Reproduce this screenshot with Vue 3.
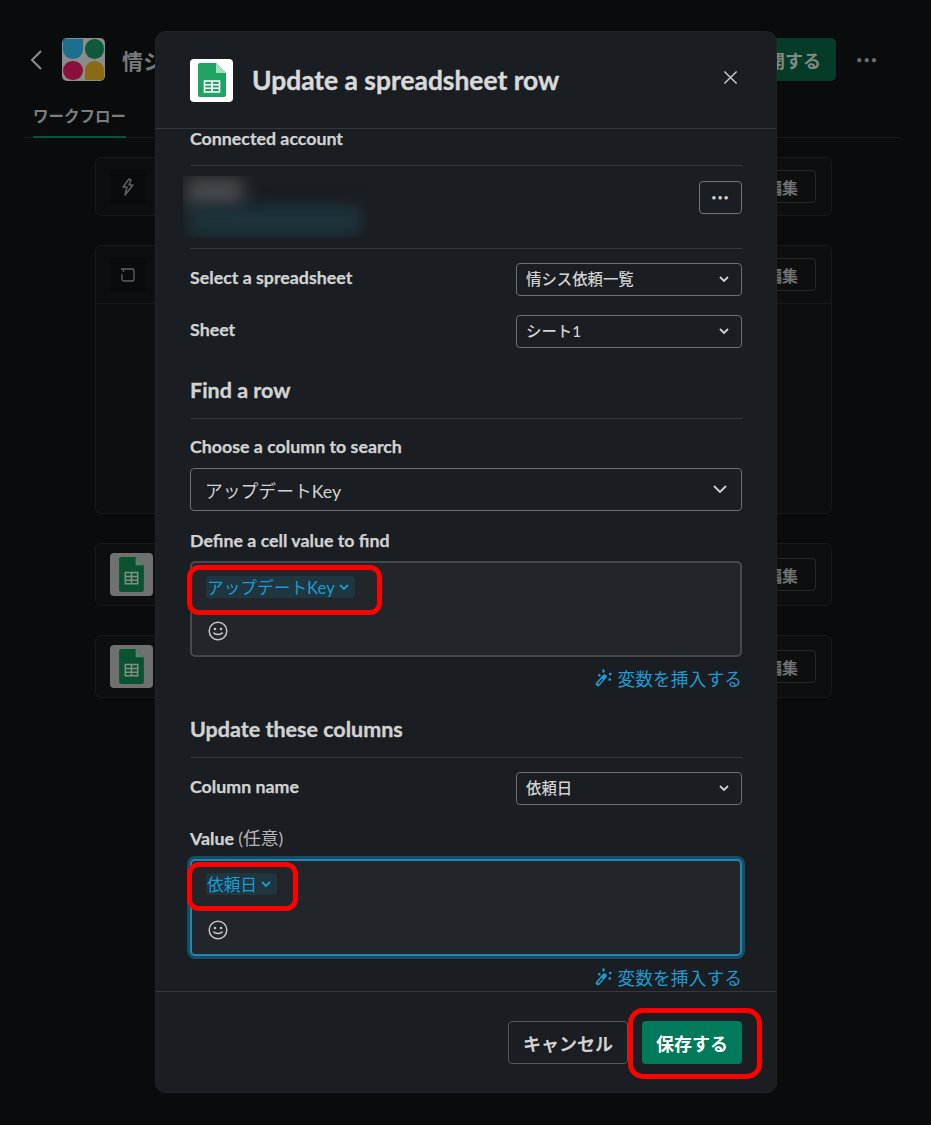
<script setup>
const cards = [
  { kind: 'zap', tall: false },
  { kind: 'loop', tall: true },
  { kind: 'sheet', tall: false },
  { kind: 'sheet', tall: false },
]
</script>

<template>
  <div class="page">
    <div class="bg">
      <header class="top">
        <svg class="back" width="16" height="24" viewBox="0 0 16 24"><path d="M13 3 4 12l9 9" fill="none" stroke="#8a8d90" stroke-width="2"/></svg>
        <div class="applogo">
          <i class="q q1"></i><i class="q q2"></i><i class="q q3"></i><i class="q q4"></i>
        </div>
        <span class="apptitle">情シス依頼</span>
        <span class="grow"></span>
        <span class="publish">公開する</span>
        <span class="more">•••</span>
      </header>
      <nav class="tabs"><span class="tab">ワークフロー</span></nav>
      <div class="cards">
        <section v-for="(c, i) in cards" :key="i" class="card" :class="{ tall: c.tall, sheetcard: c.kind === 'sheet' }">
          <div class="cardhead">
            <div v-if="c.kind === 'sheet'" class="dimsheet">
              <svg width="25" height="35" viewBox="0 0 24 34"><path d="M2 0h14l8 8v24a2 2 0 0 1-2 2H2a2 2 0 0 1-2-2V2a2 2 0 0 1 2-2Z" fill="#0a5231"/><path d="M16 0l8 8h-8Z" fill="#5f7f6e"/><path d="M6 15h12v11H6Zm0 4h12M6 22.500h12M12 15v11" fill="none" stroke="#7f8f86" stroke-width="1.500"/></svg>
            </div>
            <div v-else class="dimicon">
              <svg v-if="c.kind === 'zap'" width="16" height="18" viewBox="0 0 16 18"><path d="M9 1 3 9h4l-2 8 8-10H9l2-5Z" fill="none" stroke="#5f6163" stroke-width="1.500" stroke-linejoin="round"/></svg>
              <svg v-else width="16" height="16" viewBox="0 0 16 16"><path d="M5 2h8a2 2 0 0 1 1 2v8a2 2 0 0 1-2 2H4a2 2 0 0 1-2-2V7M1 2h5M3.500 2v3" fill="none" stroke="#5f6163" stroke-width="1.300"/></svg>
            </div>
            <span class="grow"></span>
            <span class="editbtn">編集</span>
          </div>
          <div v-if="c.tall" class="cardbody"></div>
        </section>
      </div>
    </div>

    <div class="modal">
      <header class="mhead">
        <div class="sheetlogo">
          <svg width="30" height="36" viewBox="0 0 30 36">
            <path d="M3 1h16l10 10v22a2 2 0 0 1-2 2H3a2 2 0 0 1-2-2V3a2 2 0 0 1 2-2Z" fill="#1fa463"/>
            <path d="M19 1l10 10H19Z" fill="#a8dcc1"/>
            <path d="M7.500 19h15v11h-15Zm0 3.700h15m-15 3.600h15M15 19v11" fill="none" stroke="#fff" stroke-width="1.600"/>
          </svg>
        </div>
        <h1 class="mtitle">Update a spreadsheet row</h1>
        <svg class="close" width="15" height="15" viewBox="0 0 16 16"><path d="M1.500 1.500l13 13m0-13l-13 13" stroke="#c9cbcc" stroke-width="1.500" fill="none"/></svg>
      </header>

      <div class="mbody">
        <div class="label first">Connected account</div>
        <div class="account">
          <div class="blurbox"><i class="b1"></i><i class="b2"></i></div>
          <span class="dotsbtn">•••</span>
        </div>

        <div class="row row1">
          <span class="label">Select a spreadsheet</span>
          <div class="sel small"><span>情シス依頼一覧</span><svg width="10" height="7" viewBox="0 0 10 7"><path d="M1 1l4 4 4-4" fill="none" stroke="#d1d2d3" stroke-width="1.800"/></svg></div>
        </div>
        <div class="row row2">
          <span class="label">Sheet</span>
          <div class="sel small"><span>シート1</span><svg width="10" height="7" viewBox="0 0 10 7"><path d="M1 1l4 4 4-4" fill="none" stroke="#d1d2d3" stroke-width="1.800"/></svg></div>
        </div>

        <h2 class="sec sec1">Find a row</h2>
        <div class="label lab1">Choose a column to search</div>
        <div class="sel big"><span>アップデートKey</span><svg width="14" height="9" viewBox="0 0 14 9"><path d="M1 1l6 6 6-6" fill="none" stroke="#d1d2d3" stroke-width="1.800"/></svg></div>
        <div class="label lab2">Define a cell value to find</div>
        <div class="area">
          <span class="tag">アップデートKey<svg width="10" height="7" viewBox="0 0 10 7"><path d="M1 1l4 4 4-4" fill="none" stroke="#1d9bd1" stroke-width="1.800"/></svg></span>
          <svg class="smile" width="20" height="20" viewBox="0 0 20 20"><circle cx="10" cy="10" r="8.800" fill="none" stroke="#c4c5c6" stroke-width="1.500"/><circle cx="7" cy="8" r="1.300" fill="#c4c5c6"/><circle cx="13" cy="8" r="1.300" fill="#c4c5c6"/><path d="M5.500 11.500c1 2.600 8 2.600 9 0" fill="none" stroke="#c4c5c6" stroke-width="1.500"/></svg>
        </div>
        <div class="insert">
          <svg width="18" height="18" viewBox="0 0 18 18"><path d="M3 15 9.500 7.500" stroke="#1d9bd1" stroke-width="4.400" stroke-linecap="round"/><path d="M3.500 14.500 7 10.500" stroke="#1a1d21" stroke-width="1.200" stroke-linecap="round"/><path d="M8.500 1.500v1M15 5h.5M14.500 10.500h.5M4 6l.5.500" stroke="#1d9bd1" stroke-width="2.400" stroke-linecap="round"/></svg>
          <span>変数を挿入する</span>
        </div>

        <h2 class="sec sec2">Update these columns</h2>
        <div class="row row3">
          <span class="label">Column name</span>
          <div class="sel small"><span>依頼日</span><svg width="10" height="7" viewBox="0 0 10 7"><path d="M1 1l4 4 4-4" fill="none" stroke="#d1d2d3" stroke-width="1.800"/></svg></div>
        </div>
        <div class="label lab3">Value <span class="opt">(任意)</span></div>
        <div class="area focus">
          <span class="tag">依頼日<svg width="10" height="7" viewBox="0 0 10 7"><path d="M1 1l4 4 4-4" fill="none" stroke="#1d9bd1" stroke-width="1.800"/></svg></span>
          <svg class="smile" width="20" height="20" viewBox="0 0 20 20"><circle cx="10" cy="10" r="8.800" fill="none" stroke="#c4c5c6" stroke-width="1.500"/><circle cx="7" cy="8" r="1.300" fill="#c4c5c6"/><circle cx="13" cy="8" r="1.300" fill="#c4c5c6"/><path d="M5.500 11.500c1 2.600 8 2.600 9 0" fill="none" stroke="#c4c5c6" stroke-width="1.500"/></svg>
        </div>
        <div class="insert">
          <svg width="18" height="18" viewBox="0 0 18 18"><path d="M3 15 9.500 7.500" stroke="#1d9bd1" stroke-width="4.400" stroke-linecap="round"/><path d="M3.500 14.500 7 10.500" stroke="#1a1d21" stroke-width="1.200" stroke-linecap="round"/><path d="M8.500 1.500v1M15 5h.5M14.500 10.500h.5M4 6l.5.500" stroke="#1d9bd1" stroke-width="2.400" stroke-linecap="round"/></svg>
          <span>変数を挿入する</span>
        </div>
      </div>

      <footer class="mfoot">
        <button class="btn cancel">キャンセル</button>
        <button class="btn save">保存する</button>
      </footer>
    </div>

    <div class="mark m1"></div>
    <div class="mark m2"></div>
    <div class="mark m3"></div>
  </div>
</template>

<style scoped>
.page {
  position: relative;
  width: 931px;
  height: 1125px;
  overflow: hidden;
  background: #0a0b0c;
  font-family: Lato, "Noto Sans CJK JP", sans-serif;
  color: #d1d2d3;
}
.bg { padding: 38px 29px 0 24px; }
.top { display: flex; align-items: center; height: 43px; padding-left: 4px; }
.back { margin-right: 18px; }
.applogo {
  display: grid; grid-template-columns: 1fr 1fr; gap: 2px; padding: 1px;
  width: 43px; height: 43px; box-sizing: border-box; border-radius: 5px; background: #8b8c8d;
}
.q { display: block; }
.q1 { background: #1a6f8c; border-radius: 0 0 50% 50%; }
.q2 { background: #10593a; border-radius: 50%; }
.q3 { background: #8a0f3c; border-radius: 50%; }
.q4 { background: #8a6a14; border-radius: 50% 50% 0 0; }
.apptitle { margin-left: 17px; font-size: 21px; font-weight: 700; color: #76797c; white-space: nowrap; }
.grow { flex: 1; }
.publish {
  display: flex; align-items: center; justify-content: flex-end;
  width: 120px; height: 43px; box-sizing: border-box; margin-right: 20px; padding-right: 15px;
  border-radius: 5px; background: #063b28; color: #7f8a85; font-size: 18px; font-weight: 700;
}
.more { width: 34px; margin-right: 12px; font-size: 11px; letter-spacing: 1px; color: #6d6f71; }
.tabs { margin-top: 20px; height: 37px; border-bottom: 1px solid #17191b; padding-left: 9px; box-sizing: border-box; }
.tab {
  display: inline-block; height: 37px; box-sizing: border-box; padding-top: 3px;
  border-bottom: 2px solid #07513a; font-size: 15.500px; font-weight: 700; color: #7b7d7f;
}
.cards { display: flex; flex-direction: column; gap: 29px; margin: 19px 70px 0 71px; }
.card { border: 1px solid #17191b; border-radius: 6px; background: #0d0e0f; }
.cardhead { display: flex; align-items: center; height: 57px; padding: 0 15px 0 14px; }
.tall .cardhead { border-bottom: 1px solid #17191b; }
.cardbody { height: 209px; }
.sheetcard .cardhead { height: 61px; }
.dimicon { display: flex; align-items: center; justify-content: center; width: 36px; height: 36px; background: #0a0b0c; border-radius: 4px; }
.dimsheet { display: flex; align-items: center; justify-content: center; width: 43px; height: 43px; border-radius: 4px; background: #6f7170; }
.editbtn {
  display: flex; align-items: center; justify-content: flex-end;
  width: 90px; height: 33px; box-sizing: border-box; padding-right: 17px; border: 1px solid #26282a; border-radius: 4px;
  font-size: 16px; font-weight: 700; color: #6f7173;
}

.modal {
  position: absolute; left: 156px; top: 32px; width: 620px; height: 1060px;
  display: flex; flex-direction: column; box-sizing: border-box;
  background: #1a1d21; border-radius: 10px; box-shadow: 0 0 0 1px #1f2226;
}
.mhead {
  display: flex; align-items: center; flex: none; height: 97px; box-sizing: border-box;
  padding: 0 38px 0 34px; border-bottom: 1px solid #34373b;
}
.sheetlogo {
  display: flex; align-items: center; justify-content: center;
  width: 43px; height: 43px; background: #fff; border-radius: 4px; flex: none;
}
.mtitle {
  flex: 1; margin: 0 0 0 19px; font-size: 26.400px; font-weight: 700; color: #d8d9da; white-space: nowrap;
  -webkit-text-stroke: 0.4px #d8d9da;
}
.close { position: relative; top: -3px; }
.mbody { flex: 1; padding: 0 34px; min-height: 0; }
.label {
  font-size: 17.800px; line-height: 22px; font-weight: 700; color: #d1d2d3; white-space: nowrap;
  -webkit-text-stroke: 0.25px #d1d2d3;
}
.row .label { padding-bottom: 6px; }
.first { padding: 0 0 16px; margin-top: -2px; border-bottom: 1px solid #34373b; }
.account {
  display: flex; align-items: center; justify-content: space-between;
  height: 83px; box-sizing: border-box; padding-bottom: 20px; border-bottom: 1px solid #34373b;
}
.blurbox { position: relative; width: 186px; height: 62px; margin-left: -7px; margin-bottom: -20px; overflow: hidden; }
.b1 { position: absolute; left: 4px; top: 2px; width: 56px; height: 28px; background: #4a4d50; filter: blur(9px); }
.b2 { position: absolute; left: 6px; top: 30px; width: 172px; height: 30px; background: #1e333c; filter: blur(8px); }
.dotsbtn {
  display: flex; align-items: center; justify-content: center;
  width: 43px; height: 33px; box-sizing: border-box; border: 1px solid #70737a; border-radius: 4px;
  font-size: 9px; letter-spacing: 1px; color: #d1d2d3;
}
.row { display: flex; align-items: center; justify-content: space-between; }
.row1 { margin-top: 14px; }
.row2 { margin-top: 19px; }
.sel {
  display: flex; align-items: center; justify-content: space-between; box-sizing: border-box;
  border: 1px solid #6b6e72; border-radius: 4px; background: #1a1d21;
}
.small { width: 226px; height: 33px; padding: 0 12px 0 9px; font-size: 15.400px; font-weight: 500; }
.small span { position: relative; top: -2px; }
.big { height: 43px; padding: 0 14px; font-size: 17.800px; color: #d1d2d3; }
.sec {
  margin: 0; font-size: 21.500px; line-height: 28px; font-weight: 700; color: #d1d2d3;
  padding-bottom: 14px; border-bottom: 1px solid #34373b;
  -webkit-text-stroke: 0.35px #d1d2d3;
}
.sec1 { margin-top: 28px; }
.lab1 { margin-top: 16px; margin-bottom: 11px; }
.lab2 { margin-top: 18px; margin-bottom: 10px; }
.area {
  position: relative; height: 96px; box-sizing: border-box; padding: 13px 15px;
  border: 2px solid #45484c; border-radius: 5px; background: #222529;
}
.focus { height: 97px; border-color: #1d88b5; box-shadow: 0 0 0 3px #174c62; padding: 12px 15px; }
.tag {
  display: inline-flex; align-items: center; gap: 4px; height: 22px; padding: 0 6px 0 1px; margin-left: -1px;
  background: #1f3540; border-radius: 3px; color: #1d9bd1; font-size: 16.700px;
}
.smile { position: absolute; left: 16px; bottom: 14px; }
.insert {
  display: flex; align-items: center; justify-content: flex-end; gap: 5px;
  height: 22px; margin-top: 10px; font-size: 17.800px; color: #1d9bd1;
}
.sec2 { margin-top: 26px; }
.row3 { margin-top: 14px; }
.lab3 { margin-top: 22px; margin-bottom: 10px; }
.opt { font-weight: 400; color: #b4b5b6; -webkit-text-stroke: 0; }
.mfoot {
  display: flex; justify-content: flex-end; gap: 14px; flex: none; height: 101px; box-sizing: border-box;
  padding: 29px 34px 0; border-top: 1px solid #34373b;
}
.btn {
  height: 43px; box-sizing: border-box; border-radius: 4px; font-family: inherit;
  font-size: 18px; font-weight: 700;
}
.cancel { width: 120px; background: #1a1d21; color: #d1d2d3; border: 1px solid #565856; }
.save { width: 100px; background: #007a5a; color: #fff; border: 0; }

.mark { position: absolute; border: 5px solid #f00; border-radius: 12px; box-sizing: border-box; }
.m1 { left: 187px; top: 565px; width: 195px; height: 50px; }
.m2 { left: 187px; top: 862px; width: 111px; height: 49px; }
.m3 { left: 628px; top: 1008px; width: 134px; height: 71px; border-radius: 15px; }
</style>
